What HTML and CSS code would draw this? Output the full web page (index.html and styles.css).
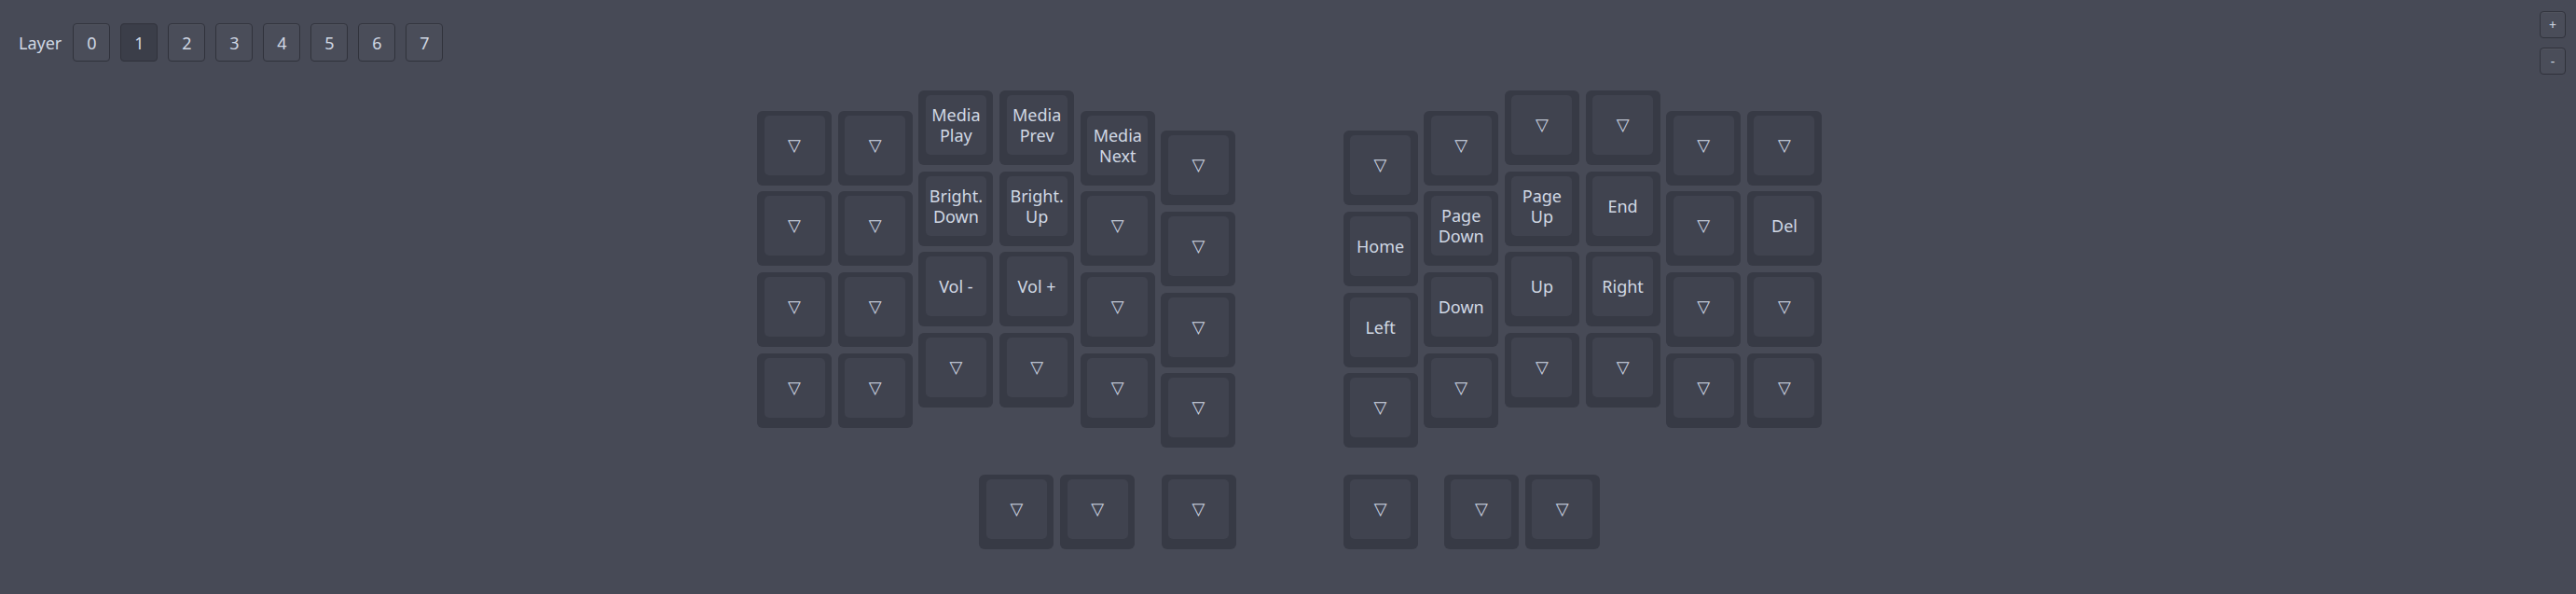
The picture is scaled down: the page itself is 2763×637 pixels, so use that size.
FILE: index.html
```html
<!DOCTYPE html>
<html lang="en">
<head>
<meta charset="utf-8">
<title>Keymap</title>
<link rel="stylesheet" href="styles.css">
</head>
<body>
<header class="topbar">
  <div class="layers">
    <span class="layers-label">Layer</span>
    <button class="btn layer-btn">0</button>
    <button class="btn layer-btn is-active">1</button>
    <button class="btn layer-btn">2</button>
    <button class="btn layer-btn">3</button>
    <button class="btn layer-btn">4</button>
    <button class="btn layer-btn">5</button>
    <button class="btn layer-btn">6</button>
    <button class="btn layer-btn">7</button>
  </div>
  <div class="zoom">
    <button class="btn zoom-btn">+</button>
    <button class="btn zoom-btn">-</button>
  </div>
</header>

<main class="stage">
  <div class="keyboard">
    <div class="main-rows">
      <div class="half">
        <div class="col off-0">
          <div class="key"><div class="cap"><span class="trns">▽</span></div></div>
          <div class="key"><div class="cap"><span class="trns">▽</span></div></div>
          <div class="key"><div class="cap"><span class="trns">▽</span></div></div>
          <div class="key"><div class="cap"><span class="trns">▽</span></div></div>
        </div>
        <div class="col off-0">
          <div class="key"><div class="cap"><span class="trns">▽</span></div></div>
          <div class="key"><div class="cap"><span class="trns">▽</span></div></div>
          <div class="key"><div class="cap"><span class="trns">▽</span></div></div>
          <div class="key"><div class="cap"><span class="trns">▽</span></div></div>
        </div>
        <div class="col off-up">
          <div class="key"><div class="cap">Media<br>Play</div></div>
          <div class="key"><div class="cap">Bright.<br>Down</div></div>
          <div class="key"><div class="cap">Vol -</div></div>
          <div class="key"><div class="cap"><span class="trns">▽</span></div></div>
        </div>
        <div class="col off-up">
          <div class="key"><div class="cap">Media<br>Prev</div></div>
          <div class="key"><div class="cap">Bright.<br>Up</div></div>
          <div class="key"><div class="cap">Vol +</div></div>
          <div class="key"><div class="cap"><span class="trns">▽</span></div></div>
        </div>
        <div class="col off-0">
          <div class="key"><div class="cap">Media<br>Next</div></div>
          <div class="key"><div class="cap"><span class="trns">▽</span></div></div>
          <div class="key"><div class="cap"><span class="trns">▽</span></div></div>
          <div class="key"><div class="cap"><span class="trns">▽</span></div></div>
        </div>
        <div class="col off-down">
          <div class="key"><div class="cap"><span class="trns">▽</span></div></div>
          <div class="key"><div class="cap"><span class="trns">▽</span></div></div>
          <div class="key"><div class="cap"><span class="trns">▽</span></div></div>
          <div class="key"><div class="cap"><span class="trns">▽</span></div></div>
        </div>
      </div>

      <div class="half">
        <div class="col off-down">
          <div class="key"><div class="cap"><span class="trns">▽</span></div></div>
          <div class="key"><div class="cap">Home</div></div>
          <div class="key"><div class="cap">Left</div></div>
          <div class="key"><div class="cap"><span class="trns">▽</span></div></div>
        </div>
        <div class="col off-0">
          <div class="key"><div class="cap"><span class="trns">▽</span></div></div>
          <div class="key"><div class="cap">Page<br>Down</div></div>
          <div class="key"><div class="cap">Down</div></div>
          <div class="key"><div class="cap"><span class="trns">▽</span></div></div>
        </div>
        <div class="col off-up">
          <div class="key"><div class="cap"><span class="trns">▽</span></div></div>
          <div class="key"><div class="cap">Page<br>Up</div></div>
          <div class="key"><div class="cap">Up</div></div>
          <div class="key"><div class="cap"><span class="trns">▽</span></div></div>
        </div>
        <div class="col off-up">
          <div class="key"><div class="cap"><span class="trns">▽</span></div></div>
          <div class="key"><div class="cap">End</div></div>
          <div class="key"><div class="cap">Right</div></div>
          <div class="key"><div class="cap"><span class="trns">▽</span></div></div>
        </div>
        <div class="col off-0">
          <div class="key"><div class="cap"><span class="trns">▽</span></div></div>
          <div class="key"><div class="cap"><span class="trns">▽</span></div></div>
          <div class="key"><div class="cap"><span class="trns">▽</span></div></div>
          <div class="key"><div class="cap"><span class="trns">▽</span></div></div>
        </div>
        <div class="col off-0">
          <div class="key"><div class="cap"><span class="trns">▽</span></div></div>
          <div class="key"><div class="cap">Del</div></div>
          <div class="key"><div class="cap"><span class="trns">▽</span></div></div>
          <div class="key"><div class="cap"><span class="trns">▽</span></div></div>
        </div>
      </div>
    </div>

    <div class="thumbs">
      <div class="thumb-group tg-l1">
        <div class="key"><div class="cap"><span class="trns">▽</span></div></div>
        <div class="key"><div class="cap"><span class="trns">▽</span></div></div>
      </div>
      <div class="thumb-group tg-l2">
        <div class="key"><div class="cap"><span class="trns">▽</span></div></div>
      </div>
      <div class="thumb-group tg-r1">
        <div class="key"><div class="cap"><span class="trns">▽</span></div></div>
      </div>
      <div class="thumb-group tg-r2">
        <div class="key"><div class="cap"><span class="trns">▽</span></div></div>
        <div class="key"><div class="cap"><span class="trns">▽</span></div></div>
      </div>
    </div>
  </div>
</main>
</body>
</html>
```
FILE: styles.css
```css
:root {
  --u: 86.7px;
  --k: 80px;
  --g: 6.7px;
  --bg: #474a56;
  --key-shadow: #373a45;
  --key-cap: #40434f;
  --text: #d0d8e4;
}

html, body {
  margin: 0;
  padding: 0;
  background: var(--bg);
}

body {
  width: 2763px;
  height: 637px;
  overflow: hidden;
  font-family: "Noto Sans", "Open Sans", sans-serif;
  color: var(--text);
}

/* ---------- top bar ---------- */
.topbar {
  display: flex;
  justify-content: space-between;
  align-items: flex-start;
  padding: 12px 11px 0 20px;
}

.layers {
  display: flex;
  align-items: center;
  gap: 11px;
  margin-top: 13px;
}

.layers-label {
  font-size: 18px;
  margin-right: 1px;
}

.btn {
  box-sizing: border-box;
  border: 1px solid #30323b;
  border-radius: 4px;
  background: #4a4d59;
  box-shadow: inset 0 1px 0 rgba(255, 255, 255, 0.05);
  color: var(--text);
  font-family: "Noto Sans", "Open Sans", sans-serif;
  padding: 0;
  display: flex;
  align-items: center;
  justify-content: center;
}

.layer-btn {
  width: 40px;
  height: 41px;
  font-size: 18px;
}

.layer-btn.is-active {
  background: #3b3e49;
  box-shadow: none;
}

.zoom {
  display: flex;
  flex-direction: column;
  gap: 10px;
}

.zoom-btn {
  width: 28px;
  height: 29px;
  font-size: 14px;
  line-height: 1;
}

/* ---------- keyboard ---------- */
.stage {
  display: flex;
  justify-content: center;
  padding-left: 3px;
  margin-top: 17px;
}

.keyboard {
  display: flex;
  flex-direction: column;
}

.main-rows {
  display: flex;
  align-items: flex-start;
  gap: calc(2.25 * var(--u) - var(--k));
}

.half {
  display: flex;
  align-items: flex-start;
  gap: var(--g);
}

.col {
  display: flex;
  flex-direction: column;
  gap: var(--g);
}

.off-up { margin-top: 0; }
.off-0 { margin-top: calc(0.25 * var(--u)); }
.off-down { margin-top: calc(0.5 * var(--u)); }

.key {
  box-sizing: border-box;
  width: var(--k);
  height: var(--k);
  background: var(--key-shadow);
  border-radius: 6px;
  padding: 5px 7.5px 11px 7.5px;
  display: flex;
}

.cap {
  flex: 1;
  background: var(--key-cap);
  border-radius: 5px;
  display: flex;
  align-items: center;
  justify-content: center;
  text-align: center;
  font-size: 18px;
  line-height: 22px;
  white-space: nowrap;
}

.trns {
  font-family: "DejaVu Sans", sans-serif;
  font-size: 18px;
  line-height: 1;
}

.thumbs {
  display: flex;
  margin-top: calc(4.75 * var(--u) - 0.5 * var(--u) - 4 * var(--k) - 3 * var(--g));
}

.thumb-group {
  display: flex;
  gap: var(--g);
}

.tg-l1 { margin-left: calc(2.75 * var(--u)); }
.tg-l2 { margin-left: calc(1.25 * var(--u) - var(--k)); }
.tg-r1 { margin-left: calc(2.25 * var(--u) - var(--k)); }
.tg-r2 { margin-left: calc(1.25 * var(--u) - var(--k)); }
```
